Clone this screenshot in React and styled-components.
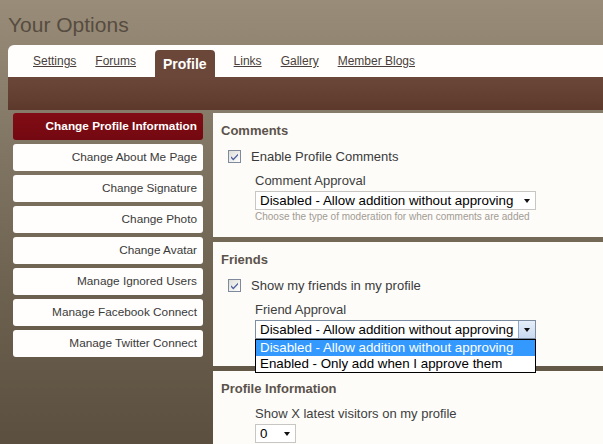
import React from 'react';
import styled, { createGlobalStyle } from 'styled-components';

const GlobalStyle = createGlobalStyle`
  html, body {
    margin: 0;
    height: 444px;
    overflow: hidden;
  }
  body {
    font-family: "Liberation Sans", Arial, sans-serif;
    background: linear-gradient(180deg, #998d7a 0%, #837765 30%, #6d6150 65%, #5b4f3f 100%);
  }
`;

const Page = styled.div`
  display: flex;
  flex-direction: column;
  height: 444px;
  padding-left: 8px;
  box-sizing: border-box;
  & > * {
    flex-shrink: 0;
  }
`;

const Title = styled.h1`
  margin: 0 0 8px;
  padding-top: 13px;
  font-size: 21px;
  line-height: 24px;
  font-weight: normal;
  color: #574c40;
`;

const TabBar = styled.nav`
  display: flex;
  align-items: center;
  gap: 19px;
  height: 32px;
  padding-left: 25px;
  background: #fffefc;
  border-top-left-radius: 6px;
`;

const TabLink = styled.a`
  font-size: 12px;
  color: #4a3e3b;
  text-decoration: underline;
  cursor: pointer;
`;

const ActiveTab = styled.span`
  align-self: flex-end;
  height: 27px;
  line-height: 28px;
  padding: 0 8px;
  font-size: 14px;
  font-weight: bold;
  color: #fff;
  background: #6b4739;
  border-radius: 4px 4px 0 0;
`;

const SubBar = styled.div`
  height: 33px;
  background: linear-gradient(180deg, #6b4739 0%, #664234 40%, #5d392c 100%);
`;

const Body = styled.div`
  flex: 1 0 auto;
  display: flex;
  gap: 10px;
  margin-top: 3px;
  padding-left: 5px;
`;

const Sidebar = styled.ul`
  list-style: none;
  margin: 0;
  padding: 0;
  width: 190px;
  flex: none;
  align-self: flex-start;
  display: flex;
  flex-direction: column;
  gap: 4px;
`;

const SideItem = styled.li`
  height: 27px;
  line-height: 27px;
  padding-right: 6px;
  text-align: right;
  border-radius: 3px;
  font-size: 11.8px;
  font-weight: ${p => (p.$active ? 'bold' : 'normal')};
  color: ${p => (p.$active ? '#fff' : '#3a3a3a')};
  background: ${p => (p.$active ? 'linear-gradient(180deg, #820d16, #730810)' : '#fffefc')};
`;

const Panel = styled.div`
  flex: 1;
  display: flex;
  flex-direction: column;
  gap: 5px;
`;

const Section = styled.section`
  flex: ${p => (p.$grow ? 1 : 'none')};
  background: #fdfcf9;
  padding: 9px 8px 14px;
`;

const Heading = styled.h2`
  margin: 0;
  font-size: 13px;
  line-height: 18px;
  font-weight: bold;
  color: #5c534b;
`;

const CheckRow = styled.label`
  display: flex;
  align-items: center;
  gap: 10px;
  height: 18px;
  margin-top: 7px;
  padding-left: 7px;
  font-size: 13px;
  color: #3a3a3a;
`;

const Field = styled.div`
  padding-left: 34px;
  margin-top: ${p => p.$top || 8}px;
`;

const FieldLabel = styled.div`
  font-size: 13px;
  line-height: 16px;
  color: #3e3e3e;
`;

const SelectWrap = styled.div`
  position: relative;
  width: ${p => p.$width}px;
  margin-top: 2px;
`;

const SelectBox = styled.div`
  display: flex;
  align-items: center;
  height: 17px;
  padding-left: 4px;
  border: 1px solid ${p => (p.$focused ? '#7d8ea3' : '#c8c6c2')};
  background: #fff;
  font-size: 13.333px;
  color: #000;
  white-space: nowrap;
`;

const SelectText = styled.span`
  flex: 1;
`;

const Caret = styled.span`
  width: 0;
  height: 0;
  margin-right: ${p => (p.$inButton ? 0 : 5)}px;
  border-left: 3.5px solid transparent;
  border-right: 3.5px solid transparent;
  border-top: 4px solid #111;
`;

const CaretButton = styled.span`
  display: flex;
  align-items: center;
  justify-content: center;
  align-self: stretch;
  width: 16px;
  border-left: 1px solid #8ea6c6;
  background: linear-gradient(180deg, #e6eef9, #c9daf0);
`;

const Hint = styled.div`
  margin-top: 1px;
  font-size: 10px;
  line-height: 12px;
  color: #a29b93;
`;

const DropList = styled.ul`
  position: absolute;
  top: 100%;
  left: 0;
  right: 0;
  z-index: 2;
  margin: 0;
  padding: 0;
  list-style: none;
  border: 1px solid #000;
  background: #fff;
`;

const DropOption = styled.li`
  height: 16px;
  line-height: 16px;
  padding-left: 4px;
  font-size: 13.333px;
  color: ${p => (p.$selected ? '#fff' : '#000')};
  background: ${p => (p.$selected ? '#3399ff' : '#fff')};
  white-space: nowrap;
`;

const CheckIcon = () => (
  <svg width="13" height="13" viewBox="0 0 13 13" style={{ flex: 'none' }}>
    <defs>
      <linearGradient id="cbg" x1="0" y1="0" x2="1" y2="1">
        <stop offset="0" stopColor="#dcdcd7" />
        <stop offset="1" stopColor="#ffffff" />
      </linearGradient>
    </defs>
    <rect x="0.5" y="0.5" width="12" height="12" fill="url(#cbg)" stroke="#7f8a9c" />
    <path d="M3 6.2 L5.3 8.6 L10 3.8 L10 5.6 L5.3 10.4 L3 8 Z" fill="#4d5f9c" />
  </svg>
);

const Select = ({ value, width, focused, options }) => (
  <SelectWrap $width={width}>
    <SelectBox $focused={focused}>
      <SelectText>{value}</SelectText>
      {focused ? (
        <CaretButton>
          <Caret $inButton />
        </CaretButton>
      ) : (
        <Caret />
      )}
    </SelectBox>
    {options && (
      <DropList>
        {options.map((o, i) => (
          <DropOption key={i} $selected={o === value}>{o}</DropOption>
        ))}
      </DropList>
    )}
  </SelectWrap>
);

const tabs = ['Settings', 'Forums', 'Profile', 'Links', 'Gallery', 'Member Blogs'];

const menu = [
  'Change Profile Information',
  'Change About Me Page',
  'Change Signature',
  'Change Photo',
  'Change Avatar',
  'Manage Ignored Users',
  'Manage Facebook Connect',
  'Manage Twitter Connect',
];

const DISABLED = 'Disabled - Allow addition without approving';
const ENABLED = 'Enabled - Only add when I approve them';

export default function App() {
  return (
    <Page>
      <GlobalStyle />
      <Title>Your Options</Title>
      <TabBar>
        {tabs.map(t =>
          t === 'Profile' ? <ActiveTab key={t}>{t}</ActiveTab> : <TabLink key={t}>{t}</TabLink>
        )}
      </TabBar>
      <SubBar />
      <Body>
        <Sidebar>
          {menu.map((m, i) => (
            <SideItem key={m} $active={i === 0}>{m}</SideItem>
          ))}
        </Sidebar>
        <Panel>
          <Section>
            <Heading>Comments</Heading>
            <CheckRow><CheckIcon />Enable Profile Comments</CheckRow>
            <Field>
              <FieldLabel>Comment Approval</FieldLabel>
              <Select value={DISABLED} width={281} />
              <Hint>Choose the type of moderation for when comments are added</Hint>
            </Field>
          </Section>
          <Section>
            <Heading>Friends</Heading>
            <CheckRow><CheckIcon />Show my friends in my profile</CheckRow>
            <Field>
              <FieldLabel>Friend Approval</FieldLabel>
              <Select value={DISABLED} width={281} focused options={[DISABLED, ENABLED]} />
              <Hint>Choose the type of moderation for when friends are added</Hint>
            </Field>
          </Section>
          <Section $grow>
            <Heading>Profile Information</Heading>
            <Field $top={8}>
              <FieldLabel>Show X latest visitors on my profile</FieldLabel>
              <Select value="0" width={41} />
            </Field>
          </Section>
        </Panel>
      </Body>
    </Page>
  );
}
